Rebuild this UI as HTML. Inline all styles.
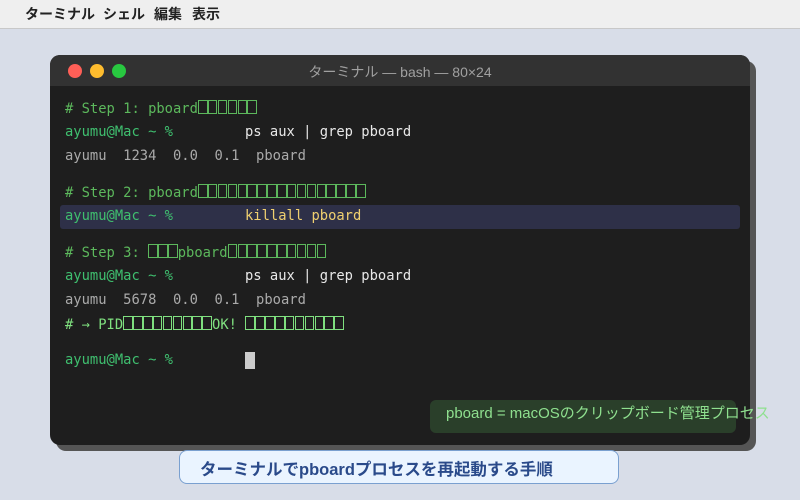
<!DOCTYPE html>
<html><head><meta charset="utf-8"><style>
body{margin:0;width:800px;height:500px;background:#d8dde8;position:relative;overflow:hidden;font-family:"Liberation Sans","Noto Sans CJK JP",sans-serif}
.menu{position:absolute;left:0;top:0;width:800px;height:28px;background:#efefef;border-bottom:1px solid #c8c8c8;font-size:14px;font-weight:bold;color:#222;line-height:28px}
.menu span{position:absolute;top:0}
.shadow{position:absolute;left:56px;top:61px;width:700px;height:390px;background:#555;border-radius:10px}
.win{position:absolute;left:50px;top:55px;width:700px;height:390px;background:#1e1e1e;border-radius:10px;overflow:hidden}
.tb{height:31px;background:#323232;position:relative}
.dot{position:absolute;top:9px;width:14px;height:14px;border-radius:50%}
.title{position:absolute;left:0;right:0;top:7px;text-align:center;color:#a0a0a0;font-size:14px}
.l{position:absolute;left:15px;font-family:"DejaVu Sans Mono","Liberation Mono",monospace;font-size:13.8px;white-space:pre;line-height:16px}
.c{color:#5cb85c}.p{color:#3fbf6f}.w{color:#e8e8e8}.g{color:#aaa}.y{color:#f0d070}.b{color:#7fe07f}
.x{display:inline-block;width:7.5px;height:12px;border:1px solid currentColor;margin:0 0.2px;vertical-align:-1px}
.hl{position:absolute;left:10px;width:680px;top:150px;height:24px;background:#2e3048;border-radius:3px}
.cmd{position:absolute;left:180px}
</style></head><body>
<div class="menu"><span style="left:25px">ターミナル</span><span style="left:103px">シェル</span><span style="left:154px">編集</span><span style="left:192px">表示</span></div>
<div class="shadow"></div>
<div class="win">
<div class="tb"><div class="dot" style="left:18px;background:#fe5f57"></div><div class="dot" style="left:40px;background:#febc2e"></div><div class="dot" style="left:62px;background:#28c840"></div><div class="title">ターミナル — bash — 80×24</div></div>
<div class="hl"></div>
<div class="l c" style="top:45px"># Step 1: pboard<span class="x"></span><span class="x"></span><span class="x"></span><span class="x"></span><span class="x"></span><span class="x"></span></div>
<div class="l p" style="top:69px">ayumu@Mac ~ %<span class="cmd w">ps aux | grep pboard</span></div>
<div class="l g" style="top:93px">ayumu  1234  0.0  0.1  pboard</div>
<div class="l c" style="top:129px"># Step 2: pboard<span class="x"></span><span class="x"></span><span class="x"></span><span class="x"></span><span class="x"></span><span class="x"></span><span class="x"></span><span class="x"></span><span class="x"></span><span class="x"></span><span class="x"></span><span class="x"></span><span class="x"></span><span class="x"></span><span class="x"></span><span class="x"></span><span class="x"></span></div>
<div class="l p" style="top:153px">ayumu@Mac ~ %<span class="cmd y">killall pboard</span></div>
<div class="l c" style="top:189px"># Step 3: <span class="x"></span><span class="x"></span><span class="x"></span>pboard<span class="x"></span><span class="x"></span><span class="x"></span><span class="x"></span><span class="x"></span><span class="x"></span><span class="x"></span><span class="x"></span><span class="x"></span><span class="x"></span></div>
<div class="l p" style="top:213px">ayumu@Mac ~ %<span class="cmd w">ps aux | grep pboard</span></div>
<div class="l g" style="top:237px">ayumu  5678  0.0  0.1  pboard</div>
<div class="l b" style="top:261px"># → PID<span class="x"></span><span class="x"></span><span class="x"></span><span class="x"></span><span class="x"></span><span class="x"></span><span class="x"></span><span class="x"></span><span class="x"></span>OK! <span class="x"></span><span class="x"></span><span class="x"></span><span class="x"></span><span class="x"></span><span class="x"></span><span class="x"></span><span class="x"></span><span class="x"></span><span class="x"></span></div>
<div class="l p" style="top:297px">ayumu@Mac ~ %<span class="cmd" style="display:inline-block;width:10px;height:17px;background:#ccc;top:0"></span></div>
<div style="position:absolute;left:380px;top:345px;width:306px;height:33px;background:#2a3f2a;border-radius:6px"></div>
</div>
<div style="position:absolute;left:446px;top:402px;font-size:15px;color:#8fe08f;white-space:nowrap">pboard = macOSのクリップボード管理プロセス</div>
<div style="position:absolute;left:179px;top:450px;width:440px;height:34px;background:#eaf4ff;border:1px solid #7aa0d0;border-radius:8px;box-sizing:border-box"></div>
<div style="position:absolute;left:200px;top:456px;font-size:16.5px;font-weight:bold;color:#2a4a8a;white-space:nowrap">ターミナルでpboardプロセスを再起動する手順</div>
</body></html>
